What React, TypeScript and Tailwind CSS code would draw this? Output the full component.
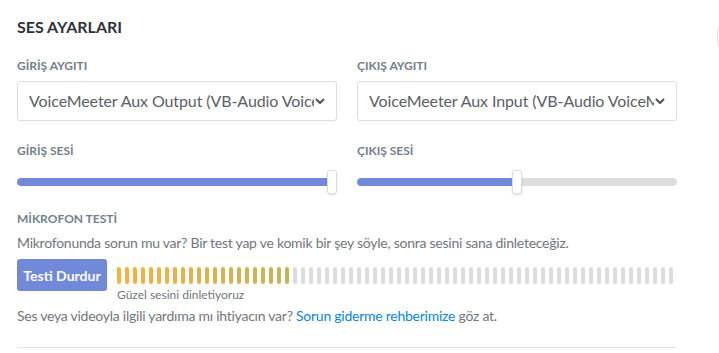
import React from 'react'

const BAR_COUNT = 70
const ACTIVE = 22

// orange -> olive like the reference meter
function barColor(i: number) {
  const t = i / (ACTIVE - 1)
  const from = [247, 178, 64]
  const to = [196, 180, 88]
  const c = from.map((v, k) => Math.round(v + (to[k] - v) * t))
  return `rgb(${c[0]}, ${c[1]}, ${c[2]})`
}

function Chevron() {
  return (
    <svg width="12" height="12" viewBox="0 0 24 24" fill="none" stroke="#4f545c" strokeWidth="4" strokeLinecap="round" strokeLinejoin="round">
      <path d="M5 9l7 7 7-7" />
    </svg>
  )
}

function DeviceSelect({ value }: { value: string }) {
  return (
    <div className="flex items-center h-[40px] pl-[11px] pr-[10px] border border-[#dcddde] rounded-[3px] bg-white">
      <span className="flex-1 min-w-0 overflow-hidden whitespace-nowrap text-[16px] tracking-[-0.1px] text-[#5c6067]">{value}</span>
      <Chevron />
    </div>
  )
}

function Slider({ pct }: { pct: number }) {
  return (
    <div className="relative h-[24px] flex items-center">
      <div className="w-full h-[8px] rounded-full bg-[#dcddde] overflow-hidden">
        <div className="h-full bg-[#7289da] rounded-full" style={{ width: `${pct}%` }} />
      </div>
      <div
        className="absolute top-0 w-[10px] h-[24px] bg-white border border-[#dcddde] rounded-[3px] shadow-sm"
        style={{ left: `calc(${pct}% - 5px)` }}
      />
    </div>
  )
}

function Label({ children }: { children: React.ReactNode }) {
  return <div className="text-[12px] font-bold uppercase text-[#737f8d] leading-[16px]">{children}</div>
}

export default function App() {
  return (
    <div className="relative w-[719px] h-[353px] bg-white overflow-hidden font-['Lato',sans-serif]">
      <div className="absolute right-[-6px] top-[26px] w-[8px] h-[22px] rounded-full border border-[#e3e5e8]" />
      <div className="w-[660px] ml-[17px] pt-[17px]">
        <h2 className="text-[16px] font-bold text-[#2e3338] leading-[20px]">SES AYARLARI</h2>

        <div className="grid grid-cols-2 gap-x-[20px] mt-[21px]">
          <div className="min-w-0">
            <Label>GİRİŞ AYGITI</Label>
            <div className="mt-[7px]">
              <DeviceSelect value="VoiceMeeter Aux Output (VB-Audio VoiceMeeter AUX VAIO)" />
            </div>
          </div>
          <div className="min-w-0">
            <Label>ÇIKIŞ AYGITI</Label>
            <div className="mt-[7px]">
              <DeviceSelect value="VoiceMeeter Aux Input (VB-Audio VoiceMeeter AUX VAIO)" />
            </div>
          </div>
        </div>

        <div className="grid grid-cols-2 gap-x-[20px] mt-[22px]">
          <div>
            <Label>GİRİŞ SESİ</Label>
            <div className="mt-[11px]">
              <Slider pct={98.5} />
            </div>
          </div>
          <div>
            <Label>ÇIKIŞ SESİ</Label>
            <div className="mt-[11px]">
              <Slider pct={50} />
            </div>
          </div>
        </div>

        <div className="mt-[17px]">
          <Label>MİKROFON TESTİ</Label>
          <p className="mt-[7px] text-[14px] leading-[18px] tracking-[-0.25px] text-[#72767d]">
            Mikrofonunda sorun mu var? Bir test yap ve komik bir şey söyle, sonra sesini sana dinleteceğiz.
          </p>
        </div>

        <div className="flex mt-[7px]">
          <button className="w-[90px] h-[32px] rounded-[3px] bg-[#7289da] text-white text-[14px] font-bold">
            Testi Durdur
          </button>
          <div className="ml-[10px] pt-[8px]">
            <div className="flex gap-[4px]">
              {Array.from({ length: BAR_COUNT }).map((_, i) => (
                <div
                  key={i}
                  className="w-[4px] h-[17px] rounded-full"
                  style={{ background: i < ACTIVE ? barColor(i) : '#dcddde' }}
                />
              ))}
            </div>
            <div className="mt-[4px] text-[12px] leading-[14px] text-[#72767d]">Güzel sesini dinletiyoruz</div>
          </div>
        </div>

        <p className="mt-[5px] text-[14px] leading-[18px] tracking-[-0.25px] text-[#72767d]">
          Ses veya videoyla ilgili yardıma mı ihtiyacın var?{' '}
          <span className="text-[#0a86d6]">Sorun giderme rehberimize</span> göz at.
        </p>

        <div className="mt-[22px] h-px bg-[#e3e5e8]" />
      </div>
    </div>
  )
}
